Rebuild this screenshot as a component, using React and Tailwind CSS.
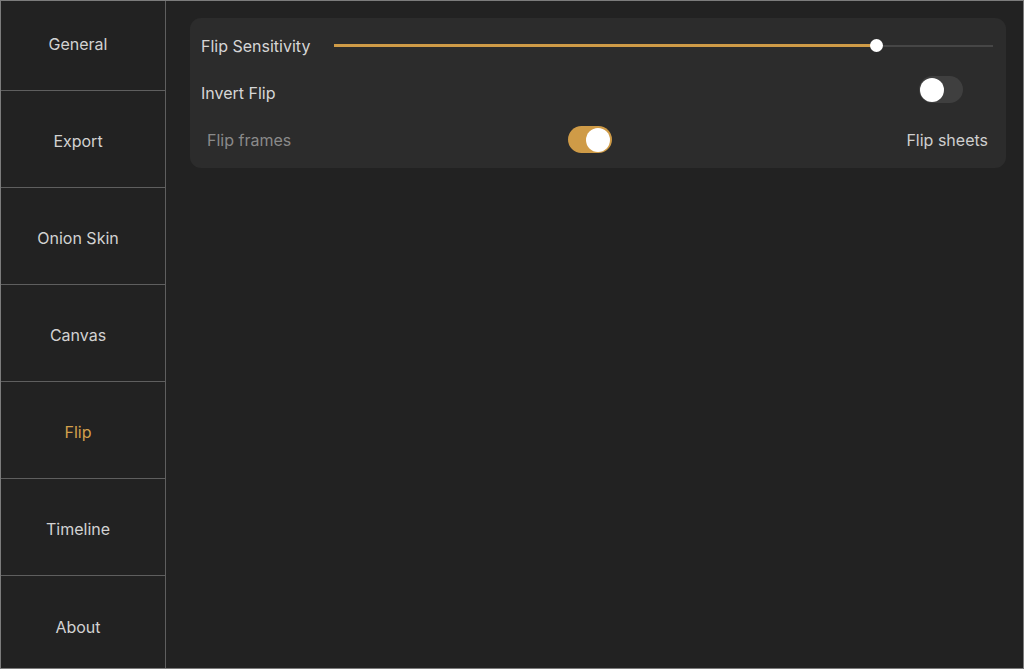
import React from "react";

const items = ["General", "Export", "Onion Skin", "Canvas", "Flip", "Timeline", "About"];

function Toggle({ on }) {
  return (
    <div
      className={
        "relative h-[27px] w-[44px] rounded-full " +
        (on ? "bg-[#cf9b47]" : "bg-[#3f3f3f]")
      }
    >
      <div
        className={
          "absolute top-[1.5px] h-[24px] w-[24px] rounded-full bg-white " +
          (on ? "right-[2px]" : "left-[1px]")
        }
      />
    </div>
  );
}

export default function App() {
  return (
    <div
      className="flex h-[669px] w-[1024px] overflow-hidden border border-[#7c7c7c] bg-[#222222]"
      style={{ fontFamily: "Inter, 'Noto Sans', sans-serif" }}
    >
      <div className="w-[165px] shrink-0 border-r border-[#5f5f5f] bg-[#222222]">
        <div className="-mt-[7px] flex flex-col">
          {items.map((it, i) => (
            <div
              key={it}
              className={
                "flex h-[97px] shrink-0 items-center justify-center pr-[10px] pt-[4px] text-[16px] " +
                (i < items.length - 1 ? "border-b border-[#5f5f5f] " : "") +
                (it === "Flip" ? "text-[#d3a04c]" : "text-[#d2d2d2]")
              }
            >
              {it}
            </div>
          ))}
        </div>
      </div>
      <div className="flex-1 bg-[#222222] pl-[24px] pr-[17px] pt-[17px]">
        <div className="rounded-[11px] bg-[#2c2c2c] pb-[5px] pl-[11px] pr-[13px] pt-[4px]">
          <div className="flex h-[47px] items-center">
            <span className="w-[133px] shrink-0 text-[16px] text-[#d6d6d6]">Flip Sensitivity</span>
            <div className="relative h-[13px] flex-1">
              <div className="absolute left-0 right-0 top-[5.5px] h-[2px] bg-[#464646]" />
              <div className="absolute left-0 top-[5px] h-[3px] w-[542px] bg-[#cf9b47]" />
              <div className="absolute left-[536px] top-0 h-[13px] w-[13px] rounded-full bg-white" />
            </div>
          </div>
          <div className="flex h-[47px] items-center justify-between">
            <span className="text-[16px] text-[#d6d6d6]">Invert Flip</span>
            <div className="-mt-[6px] mr-[30px]">
              <Toggle on={false} />
            </div>
          </div>
          <div className="flex h-[47px] items-center">
            <span className="w-[367px] shrink-0 pl-[6px] text-[16px] text-[#8a8a8a]">Flip frames</span>
            <Toggle on={true} />
            <div className="flex flex-1 justify-end pr-[5px]">
              <span className="text-[16px] text-[#cfcfcf]">Flip sheets</span>
            </div>
          </div>
        </div>
      </div>
    </div>
  );
}
